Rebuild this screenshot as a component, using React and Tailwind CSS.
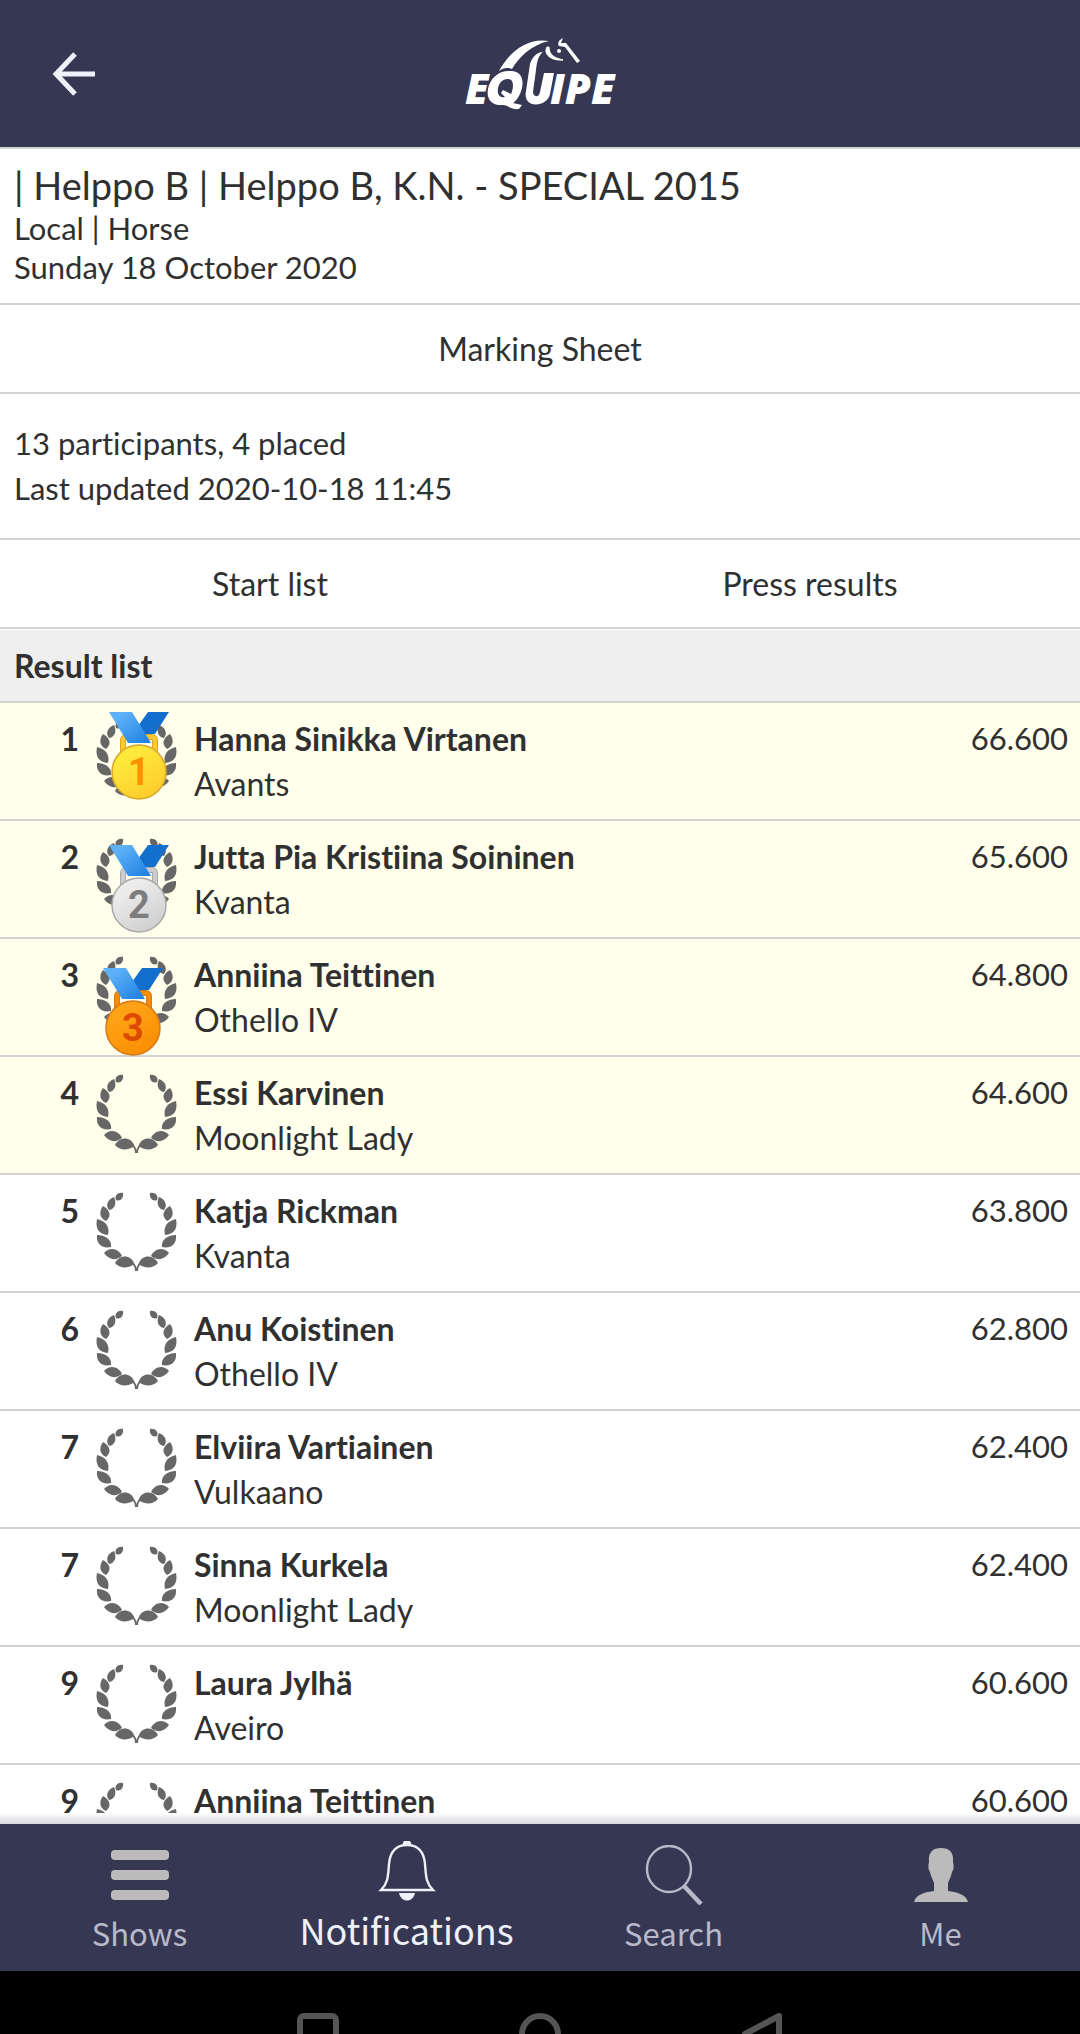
import { useState } from 'react';

const results = [
  { rank: 1, name: 'Hanna Sinikka Virtanen', horse: 'Avants', score: '66.600', placed: true, medal: 'gold' },
  { rank: 2, name: 'Jutta Pia Kristiina Soininen', horse: 'Kvanta', score: '65.600', placed: true, medal: 'silver' },
  { rank: 3, name: 'Anniina Teittinen', horse: 'Othello IV', score: '64.800', placed: true, medal: 'bronze' },
  { rank: 4, name: 'Essi Karvinen', horse: 'Moonlight Lady', score: '64.600', placed: true },
  { rank: 5, name: 'Katja Rickman', horse: 'Kvanta', score: '63.800' },
  { rank: 6, name: 'Anu Koistinen', horse: 'Othello IV', score: '62.800' },
  { rank: 7, name: 'Elviira Vartiainen', horse: 'Vulkaano', score: '62.400' },
  { rank: 7, name: 'Sinna Kurkela', horse: 'Moonlight Lady', score: '62.400' },
  { rank: 9, name: 'Laura Jylhä', horse: 'Aveiro', score: '60.600' },
  { rank: 9, name: 'Anniina Teittinen', horse: '', score: '60.600' },
];

const medals = {
  gold: { x: 9, y: 3, label: '1', light: '#ffe93b', mid: '#fdc92b', rim: '#d9a72c', text: '#ff9100' },
  silver: { x: 9, y: 18, label: '2', light: '#ececec', mid: '#cdcdcd', rim: '#a9a9a9', text: '#7d7d7d' },
  bronze: { x: 3, y: 23, label: '3', light: '#ffa316', mid: '#fb8c00', rim: '#d8791a', text: '#dd4b00' },
};

// left half of the wreath, mirrored for the right half
function Branch() {
  return (
    <>
      <path d="M26 0C27 5 23 9 19 7C17 3 21 -1 26 0Z" />
      <path d="M17 4C20 10 18 16 12 17C8 12 11 6 17 4Z" />
      <path d="M6 13C13 17 15 23 9 28C2 25 2 18 6 13Z" />
      <path d="M0 26C9 28 13 34 11 42C2 41 -2 36 0 26Z" />
      <path d="M0 42C9 42 15 47 14 54C5 56 -1 51 0 42Z" />
      <path d="M7 60C13 53 22 56 25 63C19 68 12 67 7 60Z" />
      <path d="M18 70C23 61 34 62 37 70C38 72 40 74 40 78H38C38 75 37 73 36 72C30 76 22 75 18 70Z" />
    </>
  );
}

function Wreath() {
  return (
    <svg viewBox="0 0 79 79" className="w-[79px] h-[79px] overflow-visible fill-[#676767]">
      <Branch />
      <g transform="translate(79 0) scale(-1 1)">
        <Branch />
      </g>
    </svg>
  );
}

function Medal({ kind }) {
  const m = medals[kind];
  return (
    <svg viewBox="0 0 80 100" className="absolute left-0 -top-3 w-20 h-25 overflow-visible" aria-label={kind}>
      <defs>
        <linearGradient id={`disc-${kind}`} x1="0.2" y1="0" x2="0.8" y2="1">
          <stop offset="0.2" stopColor={m.light} />
          <stop offset="1" stopColor={m.mid} />
        </linearGradient>
        <linearGradient id={`front-${kind}`} x1="0" y1="0" x2="1" y2="1">
          <stop offset="0.2" stopColor="#5eb1f8" />
          <stop offset="1" stopColor="#1b7fe0" />
        </linearGradient>
      </defs>
      <g transform={`translate(${m.x} ${m.y})`}>
        <rect x="17" y="25" width="32" height="22" rx="3" fill="none" stroke={m.rim} strokeWidth="6" />
        <rect x="17" y="25" width="32" height="22" rx="3" fill="none" stroke={m.mid} strokeWidth="4" />
        <path d="M42 0H63L49 22H38L32 14Z" fill="#126fce" />
        <path d="M3 0H26L45 31H22Z" fill={`url(#front-${kind})`} />
        <circle cx="33" cy="60" r="27" fill={`url(#disc-${kind})`} stroke={m.rim} strokeWidth="1.5" />
        <text x="33" y="73" textAnchor="middle" fill={m.text} className="font-['Roboto',sans-serif] text-[38px] font-bold">
          {m.label}
        </text>
      </g>
    </svg>
  );
}

function Logo() {
  return (
    <svg viewBox="0 0 150 74" className="w-[150px] h-[74px] overflow-visible" fill="#fff" aria-label="Equipe">
      <g className="font-['Open_Sans',sans-serif] text-[42px] font-extrabold italic">
        <text x="0" y="67">E</text>
        <text x="85" y="67">IPE</text>
      </g>
      <path fillRule="evenodd" d="M46 34C58 34 60 46 55 57C53 61 51 64 48 66L57 68L54 72C46 73 43 68 38 68C27 69 21 62 23 52C25 41 34 33 46 34ZM43 42C35 42 32 50 33 56C34 60 37 61 40 60L36 56L38 53L46 57C49 50 49 42 43 42Z" />
      <path d="M34 34C43 17 61 0 84 4C66 8 54 20 47 32C42 30 38 31 34 34Z" />
      <path d="M61 54L65 27C67 20 72 15 78 15C73 19 72 25 71 33L68 55C68 60 74 61 75 55L79 36H89L85 57C82 71 57 72 61 54Z" />
      <path d="M82 10C78 17 86 24 98 23C91 21 84 19 84 10Z" stroke="#fff" strokeWidth="1" />
      <circle cx="94" cy="14" r="2" />
      <path d="M98 1C94 3 92 6 94 9L100 10L112 26L115 24L101 6L96 6Z" />
    </svg>
  );
}

function ShowsIcon() {
  return (
    <svg viewBox="0 0 58 50" className="w-[58px] h-[50px]" fill="#bbb">
      <rect width="58" height="10" rx="4" />
      <rect y="20" width="58" height="10" rx="4" />
      <rect y="40" width="58" height="10" rx="4" />
    </svg>
  );
}

function BellIcon() {
  return (
    <svg viewBox="0 0 58 60" className="w-[58px] h-[60px]" fill="none" stroke="currentColor" strokeWidth="2.4">
      <path d="M3 49C10 42 10 36 11 23C12 10 19 4 29 4C39 4 46 10 47 23C48 36 48 42 55 49Z" />
      <path d="M26 3A3 3 0 0 1 32 3Z" fill="currentColor" />
      <path d="M21 52H37C35 62 23 62 21 52Z" fill="currentColor" stroke="none" />
    </svg>
  );
}

function SearchIcon() {
  return (
    <svg viewBox="0 0 58 60" className="w-[58px] h-[60px]" fill="none" stroke="currentColor">
      <ellipse cx="24" cy="24" rx="22" ry="23" strokeWidth="2.4" />
      <path d="M39 41L56 59" strokeWidth="4.5" />
    </svg>
  );
}

function PersonIcon() {
  return (
    <svg viewBox="0 0 54 54" className="w-[54px] h-[54px]" fill="#bbb">
      <path d="M27 0C35 0 40 4 39 14C40 18 40 21 38 24C37 29 35 32 34 35V43C42 44 52 46 54 54H0C2 46 12 44 20 43V35C19 32 17 29 16 24C14 21 14 18 15 14C14 4 19 0 27 0Z" />
    </svg>
  );
}

const tabs = [
  { label: 'Shows', icon: ShowsIcon },
  { label: 'Notifications', icon: BellIcon },
  { label: 'Search', icon: SearchIcon },
  { label: 'Me', icon: PersonIcon },
];

function ResultRow({ result }) {
  return (
    <li className={`flex items-start h-[118px] border-b-2 border-[#d3d3d3] pr-3 ${result.placed ? 'bg-[#ffffeb]' : 'bg-white'}`}>
      <span className="w-[79px] pt-[13px] text-right font-bold">{result.rank}</span>
      <div className="relative ml-[18px] mt-[18px] w-[79px]">
        <Wreath />
        {result.medal && <Medal kind={result.medal} />}
      </div>
      <div className="ml-[18px] flex-1 pt-[13px]">
        <p className="font-bold">{result.name}</p>
        <p>{result.horse}</p>
      </div>
      <span className="pt-[13px] text-[31px]">{result.score}</span>
    </li>
  );
}

export default function App() {
  const [active, setActive] = useState('Notifications');

  return (
    <div className="flex flex-col h-screen bg-white font-['Lato',sans-serif] text-[32px] leading-[45px] text-[#303030] [font-variant-ligatures:none]">
      <header className="grid grid-cols-3 items-center h-[149px] shrink-0 bg-[#363853] border-b-2 border-[#d3d3d8]">
        <button type="button" aria-label="Back" className="ml-[52px] w-11 text-[#f0f0fa]">
          <svg viewBox="0 0 44 44" className="w-11 h-11" fill="none" stroke="currentColor" strokeWidth="5">
            <path d="M43 22H4M23 2L4 22L23 42" />
          </svg>
        </button>
        <div className="justify-self-center">
          <Logo />
        </div>
      </header>

      <main className="flex-1 min-h-0 overflow-hidden">
        <section className="px-[14px] pt-3 pb-4 border-b-2 border-[#d3d3d3] text-[31px] leading-[39px]">
          <h1 className="text-[38px] leading-[48px]">| Helppo B | Helppo B, K.N. - SPECIAL 2015</h1>
          <p>Local | Horse</p>
          <p>Sunday 18 October 2020</p>
        </section>
        <a href="#marking-sheet" className="block py-[21px] text-center border-b-2 border-[#d3d3d3]">Marking Sheet</a>
        <section className="px-[14px] py-[27px] border-b-2 border-[#d3d3d3] text-[31px]">
          <p>13 participants, 4 placed</p>
          <p>Last updated 2020-10-18 11:45</p>
        </section>
        <div className="grid grid-cols-2 text-center border-b-2 border-[#d3d3d3]">
          <a href="#start-list" className="py-[21px]">Start list</a>
          <a href="#press-results" className="py-[21px]">Press results</a>
        </div>
        <h2 className="mt-px px-[14px] py-[13px] bg-[#efefef] border-b-2 border-[#d3d3d3] font-bold">Result list</h2>
        <ol>
          {results.map((result, i) => (
            <ResultRow key={i} result={result} />
          ))}
        </ol>
      </main>

      <div className="h-[11px] shrink-0 bg-linear-to-b from-white to-[#d9d9e0]" />
      <nav className="grid grid-cols-4 h-[147px] px-[6px] shrink-0 bg-[#363853] font-['Noto_Sans_CJK_SC',sans-serif]">
        {tabs.map(({ label, icon: Icon }) => (
          <button
            key={label}
            type="button"
            onClick={() => setActive(label)}
            className={`flex flex-col items-center justify-end gap-1.5 leading-[44px] ${active === label ? 'pb-5 text-[36px] text-[#f0f0fa]' : 'pb-4 text-[31px] text-[#b8bacb]'}`}
          >
            <span className="flex items-center h-[60px]">
              <Icon />
            </span>
            <span>{label}</span>
          </button>
        ))}
      </nav>
      <div className="flex justify-center gap-[180px] h-[63px] pt-[42px] shrink-0 overflow-hidden bg-black text-[#555]">
        <svg viewBox="0 0 42 42" className="w-[42px] h-[42px] shrink-0" fill="none" stroke="currentColor" strokeWidth="6">
          <rect x="3" y="3" width="36" height="36" rx="4" />
        </svg>
        <svg viewBox="0 0 42 42" className="w-[42px] h-[42px] shrink-0" fill="none" stroke="currentColor" strokeWidth="6">
          <circle cx="21" cy="21" r="18" />
        </svg>
        <svg viewBox="0 0 42 42" className="w-[42px] h-[42px] shrink-0" fill="none" stroke="currentColor" strokeWidth="6" strokeLinejoin="round">
          <path d="M38 3V39L4 21Z" />
        </svg>
      </div>
    </div>
  );
}
